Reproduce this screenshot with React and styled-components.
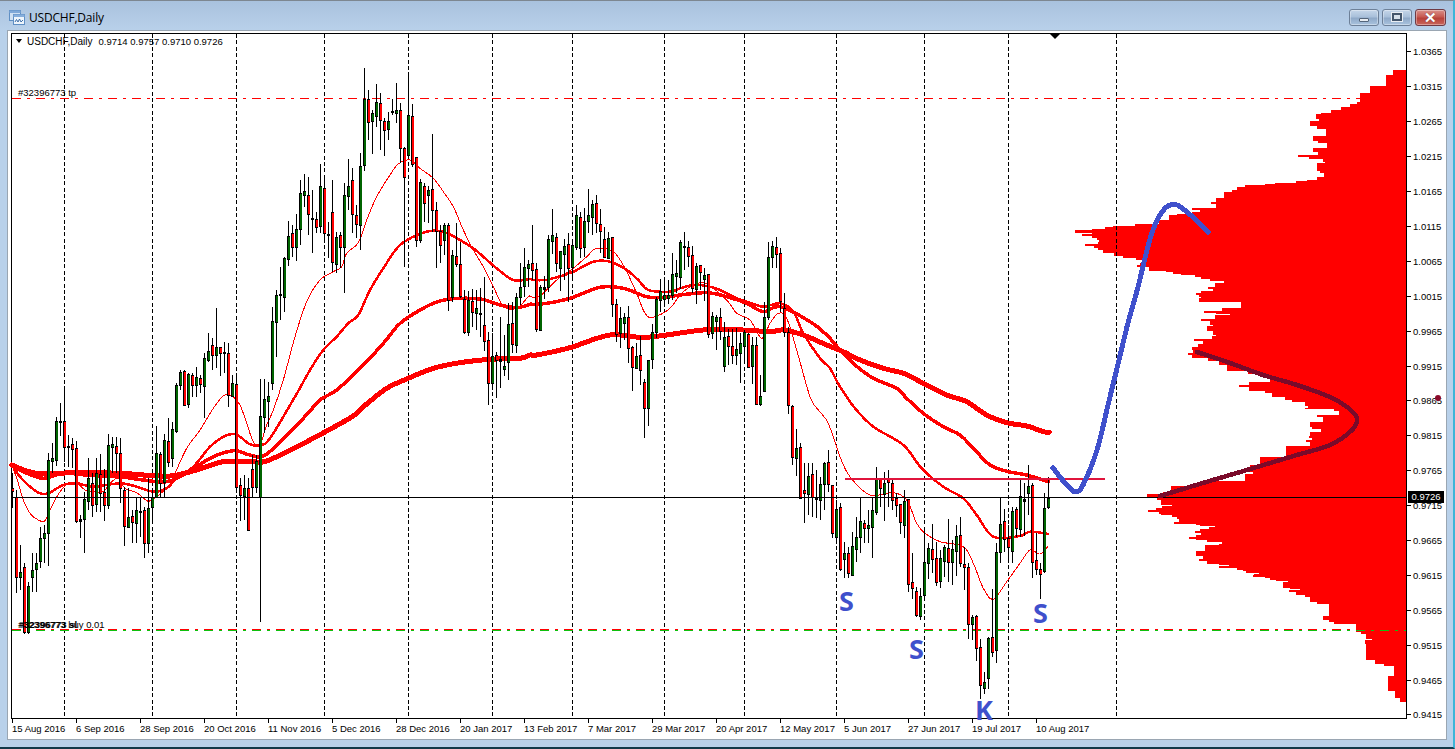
import React from "react";
import styled, { createGlobalStyle } from "styled-components";

const Global = createGlobalStyle`
  html, body { margin: 0; padding: 0; background: #b9d1ea; overflow: hidden; }
  * { box-sizing: border-box; }
`;

const AXIS_FONT = `"Liberation Sans", Arial, sans-serif`;

const Window = styled.div`
  width: 1455px; height: 749px; display: flex; flex-direction: column;
  background: linear-gradient(180deg, #a9c2de 0, #b9d1ea 30px);
  border-top: 1px solid #7d8791;
  border-bottom: 2px solid #12394a;
  border-right: 2px solid #3db5d8;
`;
const TitleBar = styled.header`
  height: 29px; flex: none; display: flex; align-items: center;
  padding: 3px 7px 0 9px; gap: 4px;
`;
const TitleText = styled.h1`
  margin: 0; flex: 1; font: 400 12px "Open Sans", sans-serif; color: #000; letter-spacing: -0.2px;
`;
const Controls = styled.div`display: flex; gap: 3px; margin-top: 0;`;
const CtlButton = styled.button`
  width: ${p => (p.$kind === "close" ? 31 : 30)}px; height: 17px; padding: 0; display: flex;
  align-items: center; justify-content: center; border-radius: 3px;
  border: 1px solid ${p => (p.$kind === "close" ? "#6f3a44" : "#6d8098")};
  background: ${p => p.$kind === "close"
    ? "linear-gradient(180deg,#d9908a 0,#c75a52 45%,#b8413a 55%,#c9665c 100%)"
    : "linear-gradient(180deg,#c5d6e9 0,#a9c0da 45%,#8fa9c8 55%,#a9c3de 100%)"};
  box-shadow: inset 0 0 0 1px rgba(255,255,255,.35);
`;
const MinGlyph = styled.span`width: 10px; height: 4px; background: #e8edf2; border: 1px solid #54657a; border-radius: 1px; margin-top: 5px;`;
const MaxGlyph = styled.span`width: 10px; height: 8px; background: #d6e0ea; border: 2px solid #44566c; box-shadow: 0 0 0 1px #e8edf2;`;
const CloseGlyph = styled.span`
  font: 700 15px/15px "Liberation Sans", sans-serif; color: #fff; text-shadow: 0 0 1px #5a2a30;
`;
const ClientFrame = styled.main`
  flex: 1; margin: 0 6px 7px 7px; border: 1px solid #9aa6b2; background: #fff;
  padding: 2px 0 0 3px; display: flex; flex-direction: column;
`;
const PlotRow = styled.div`display: flex; flex: none; height: 686px;`;
const Plot = styled.section`
  position: relative; width: 1396px; height: 686px; border: 1px solid #000; flex: none;
`;
const Svg = styled.svg`display: block; width: 1394px; height: 684px; overflow: visible;`;
const Legend = styled.div`
  position: absolute; left: 4px; top: 1px; display: flex; align-items: center; height: 12px;
  font: 9.5px ${AXIS_FONT}; color: #000; white-space: pre;
`;
const LegendMark = styled.i`
  width: 0; height: 0; border: 3.5px solid transparent; border-top: 4px solid #000; border-bottom: 0;
  margin-right: 5px;
`;
const LegendName = styled.span`margin-right: 6px; font-size: 10px;`;
const PriceAxis = styled.aside`
  position: relative; width: 41px; height: 686px; flex: none; padding-top: 1.55px;
  font: 9.5px ${AXIS_FONT}; color: #000;
`;
const PriceRow = styled.div`
  height: 34.9px; display: flex; align-items: center; gap: 2px;
  &::before { content: ""; width: 4px; height: 1px; background: #000; flex: none; }
`;
const PriceBadge = styled.div`
  position: absolute; left: 1px; top: 458px; width: 36px; height: 12px; background: #000; color: #fff;
  font: 9.5px/12px ${AXIS_FONT}; text-align: center;
`;
const MarkerDot = styled.div`
  position: absolute; left: 28px; top: 362px; width: 6px; height: 6px; border-radius: 50%; background: #8a0a2a;
`;
const TimeAxis = styled.footer`
  display: flex; padding-left: 1px; font: 9.5px ${AXIS_FONT}; color: #000;
`;
const TimeCell = styled.div`
  flex: none; width: 64px; white-space: nowrap;
  &::before { content: ""; display: block; width: 1px; height: 4px; background: #000; }
  & > span { display: block; margin: 0; line-height: 12px; }
`;
const ChartText = styled.text`
  font: 9.5px ${AXIS_FONT}; fill: #000;
`;
const BoldChartText = styled(ChartText)`font-weight: 700;`;
const HandLetter = styled.text`
  font: 700 27px "Open Sans", sans-serif; fill: #3f50cc;
`;

const c7 = [
[490,535,542,595,0],[540,560,802,850,0],[705,786,800,840,1],[760,770,965,972,0],[815,828,965,972,1],[730,781,800,845,1],[730,760,776,845,1],[650,685,752,775,1],[645,670,685,760,1],[430,450,668,768,1],[400,445,452,490,1],[320,333,450,468,1],[280,333,336,378,1],[232,333,412,455,0],[375,408,411,470,1],[385,402,416,475,0],[392,415,632,638,0],[615,628,632,685,1],[545,568,626,728,1],[445,505,572,600,1],[490,520,584,620,0],[445,490,582,605,1],[432,493,550,605,0],[478,547,584,632,0],[372,405,584,597,1],[380,403,410,490,1],[380,408,430,490,0],[385,430,535,578,0],[530,540,647,707,0],[533,622,650,655,1],[600,618,635,700,0],[565,600,638,700,1],[560,602,605,680,1],[590,600,700,745,0],[505,595,700,730,1],[540,562,590,635,1],[348,430,562,565,1],[425,432,520,560,0],[372,390,515,560,1],[325,393,457,470,0],[335,358,445,470,1],[218,225,362,368,1],[180,187,225,240,1],[180,184,284,287,0],[188,193,282,293,1],[190,196,225,262,0],[170,202,224,262,1],[195,204,223,250,0],[130,145,228,323,1],[70,122,150,155,1],[85,105,135,180,0],[-5,112,135,175,1],[110,112,130,198,0],[95,126,129,190,1],[98,128,255,290,0],[195,218,258,262,1],[195,222,530,550,0],[505,526,555,632,0],[495,535,558,630,1],[505,535,660,660,0],[435,478,530,560,0],[435,453,532,550,1],[208,318,560,935,1],[208,268,322,368,1],[215,258,272,350,1],
];
const c8 = [
[740,782,968,990,1],[690,706,785,890,1],[620,703,706,780,1],[590,594,712,755,1],[483,528,596,618,1],[495,520,562,590,0],[462,508,560,602,1],[360,400,506,555,1],[342,394,404,440,1],[350,406,463,525,0],[390,474,477,578,1],[455,478,500,520,0],[312,379,497,518,1],[355,385,520,550,0],[487,522,526,595,1],[360,457,607,635,0],[515,530,611,640,1],[515,526,560,625,0],[370,405,562,698,1],[297,379,407,450,1],[325,361,463,520,0],[435,466,491,535,0],[278,319,495,570,1],[25,116,316,332,1],[90,116,187,240,0],[150,160,182,282,1],[72,127,167,200,1],[100,130,181,270,0],[175,182,211,287,0],[155,183,208,240,1],[118,154,157,165,1],[70,151,158,190,1],[130,150,263,310,0],[262,263,352,622,0],[42,166,285,295,1],[132,169,311,322,0],[290,292,539,560,0],[358,367,540,548,1],[370,379,428,485,0],[378,390,404,490,1],[222,388,449,515,0],[425,451,513,625,0],[495,512,555,610,0],[490,496,540,585,1],[490,496,720,752,0],[570,585,710,725,1],[490,589,613,620,0],[545,613,708,715,0],[690,716,815,822,0],[692,720,817,828,1],[688,724,755,800,0],[690,745,758,810,1],[685,758,761,830,1],[650,796,842,872,0],[815,841,968,1035,0],[820,888,968,990,1],[875,886,900,1015,0],[770,898,903,985,1],[825,918,926,948,1],[730,793,905,960,1],[725,790,852,880,0],[700,712,856,878,1],[610,682,712,735,1],[565,622,678,710,1],[600,612,624,680,1],
];
const c9 = [
[135,250,270,300,0],[250,268,448,455,0],[315,320,450,452,1],[288,322,326,358,1],[165,178,322,335,1],[87,166,182,222,1],[160,170,250,275,0],[212,213,263,332,1],[178,198,222,300,1],[160,193,263,365,0],[190,196,262,300,1],[75,106,200,210,1],[97,110,203,235,0],[85,124,200,230,1],[27,106,122,158,1],[60,72,110,165,1],[45,70,130,160,0],[88,133,152,220,0],[140,176,230,235,0],[155,175,233,238,1],[172,172,373,412,0],[358,373,463,485,0],[380,415,460,503,1],[400,412,430,480,1],[378,412,505,548,0],[497,502,560,632,0],[490,528,565,568,1],[468,526,571,615,0],[598,607,683,773,0],[600,541,683,738,1],[432,457,538,566,1],[350,356,455,475,1],[298,332,360,395,1],[298,344,356,378,1],[300,344,355,372,1],[220,283,345,360,1],[240,280,288,340,1],[180,187,290,328,1],[156,198,202,270,1],[182,202,227,260,0],[198,226,325,340,0],[250,258,328,372,1],[255,256,276,330,0],[265,285,296,362,1],[282,283,463,475,0],[397,409,460,478,1],[404,411,423,510,1],[385,412,453,480,0],[425,471,557,575,1],[447,469,497,555,0],[447,498,524,553,0],[445,507,524,555,1],[460,489,518,608,1],[450,457,497,540,1],[460,463,560,565,0],[470,495,557,612,1],[470,496,673,673,0],[585,648,671,678,1],
[365,412,632,635,1],[185,232,412,420,1],[182,198,230,265,1],[172,202,223,265,0],[205,220,362,395,0],[340,383,455,472,0],[440,457,676,703,0],
];
const c12 = [
[316,318,470,495,0],[388,445,473,528,1],[430,442,593,595,0],
];
const c5 = [
[40,121,128,218,0],[40,79,132,195,1],[40,73,140,200,0],[60,140,148,205,1],[80,103,150,210,1],[35,38,102,180,1],[0,37,102,125,0],[105,105,248,265,0],[150,176,260,270,1],[158,172,358,362,0],[275,308,328,385,1],[290,310,370,385,0],[245,287,375,377,1],[200,262,298,335,1],[145,213,260,310,1],[210,220,235,280,0],[180,226,233,280,1],[145,181,232,325,1],[52,86,187,195,1],[85,88,115,170,0],[65,98,132,212,1],[60,86,97,170,0],[90,100,150,180,0],[130,144,166,200,0],[165,163,217,252,0],[120,152,224,265,1],[150,148,403,425,0],[310,397,415,447,0],[410,422,495,500,0],[415,438,497,510,1],[240,337,436,450,1],[280,295,340,388,1],[222,298,328,370,0],[275,323,397,408,0],[300,325,393,415,1],[285,292,332,380,1],[208,295,337,395,0],[270,297,335,405,1],[225,258,302,378,1],[200,256,338,350,0],[290,343,350,420,0],[340,352,521,568,0],[495,502,521,570,1],[495,498,595,632,0],[568,592,706,748,0],[665,697,715,733,1],[560,564,685,716,1],[418,562,605,620,0],[280,307,600,638,1],[145,223,305,338,1],[178,212,268,305,0],[225,265,292,340,0],[172,183,302,340,1],[170,178,235,260,0],[85,138,238,262,1],[100,148,152,258,1],[45,108,130,195,1],[100,105,335,383,0],[250,330,356,375,0],[340,357,372,446,0],[130,175,362,370,1],[80,143,172,178,1],
];
const toReal = (arr, oy) => arr.map(([h, t, b, l, g]) => [oy + h / 3, oy + t / 3, oy + b / 3, oy + l / 3, g]);
const candles = [
  ...toReal(c7, 310), ...toReal(c8, 60), ...toReal(c9, 180), ...toReal(c12, 300), ...toReal(c5, 450),
];

const mapPts = (pts, ox, oy) => pts.map(([x, y]) => [ox + x / 3, oy + y / 3]);
const thin = [
  ...mapPts([[8,470],[25,520],[40,570],[60,610],[85,630],[105,632],[125,590],[150,545],[175,520],[200,518],[225,540],[250,545],[280,545],[300,520],[325,505],[345,535],[380,548],[410,572],[425,570],[450,552],[475,530],[495,490],[530,415],[570,360],[610,295],[640,258],[665,258],[690,285],[710,340],[730,395],[750,403],[770,345],[790,300]], 10, 310),
  ...mapPts([[40,960],[75,830],[110,725],[150,660],[190,635],[215,620],[230,580],[265,548],[290,480],[320,410],[360,345],[385,312],[420,300],[450,325],[490,355],[520,395],[550,440],[580,510],[610,570],[640,620],[670,680],[700,738],[740,745],[775,710]], 270, 60),
  ...mapPts([[0,350],[20,352],[40,340],[80,300],[130,265],[170,230],[200,205],[250,215],[285,265],[320,340],[345,400],[370,412],[420,385],[450,345],[490,315],[530,312],[590,360],[620,400],[660,420],[695,475],[720,430],[745,400],[770,415]], 530, 180),
  ...mapPts([[110,150],[150,290],[175,330],[205,370],[240,470],[270,530],[330,585],[400,578],[440,600]], 760, 300),
  ...mapPts([[350,220],[375,250],[420,275],[490,290],[520,340],[550,415],[580,448],[620,395],[660,340],[690,300],[720,312],[745,288]], 800, 450),
];
const lineC = [
  ...mapPts([[5,465],[30,500],[60,530],[90,550],[115,550],[160,525],[200,520],[250,530],[330,520],[380,530],[430,545],[470,535],[500,505],[550,470],[600,410],[640,380],[670,372],[690,380],[720,403],[750,405],[780,385]], 10, 310),
  ...mapPts([[75,1010],[120,930],[160,870],[200,830],[235,790],[265,765],[300,690],[340,625],[385,560],[430,530],[480,513],[520,515],[570,540],[610,565],[640,590],[680,625],[730,660],[790,660]], 270, 60),
  ...mapPts([[0,297],[45,300],[80,292],[130,275],[190,245],[240,245],[290,270],[325,300],[355,330],[420,335],[450,325],[490,315],[530,318],[570,330],[620,355],[660,368],[700,380],[750,370],[790,395]], 530, 180),
  ...mapPts([[130,100],[180,175],[210,205],[240,260],[285,325],[340,380],[430,435]], 760, 300),
  ...mapPts([[365,55],[430,110],[490,145],[530,195],[580,260],[660,258],[690,245],[745,252]], 800, 450),
];
const lineB = [
  ...mapPts([[5,465],[40,485],[100,505],[160,490],[250,497],[330,500],[400,510],[470,515],[530,490],[600,445],[670,422],[720,435],[770,432]], 10, 310),
  ...mapPts([[100,1075],[150,1020],[200,990],[280,915],[340,850],[385,795],[425,765],[490,730],[540,717],[630,717],[690,735],[740,743],[790,733]], 270, 60),
  ...mapPts([[0,373],[50,370],[120,355],[210,322],[280,325],[350,350],[400,352],[450,345],[530,338],[590,350],[650,370],[700,395],[750,380]], 530, 180),
  ...mapPts([[150,65],[200,105],[240,150],[285,195],[340,235],[410,265],[440,295],[490,340],[550,380],[600,405],[640,445],[690,495],[745,515],[800,525],[865,545]], 760, 300),
];
const lineA = [
  ...mapPts([[5,465],[80,490],[200,488],[330,490],[430,497],[490,497],[560,480],[640,455],[720,455],[790,445]], 10, 310),
  ...mapPts([[230,1080],[280,1040],[350,985],[415,955],[490,925],[570,908],[660,898],[750,895],[800,885]], 270, 60),
  ...mapPts([[0,525],[120,503],[240,465],[350,472],[520,450],[640,450],[720,455]], 530, 180),
  ...mapPts([[70,90],[130,105],[200,135],[250,155],[300,180],[370,205],[430,220],[490,250],[560,285],[620,305],[680,345],[740,368],[800,378],[850,395],[868,397]], 760, 300),
];
const sortByX = pts => [...pts].sort((a, b) => a[0] - b[0]);
const blue = [[1053,468],[1060,477],[1067,485],[1075,492],[1083,485],[1097,450],[1108,405],[1119,360],[1128,323],[1138,287],[1147,250],[1153,230],[1160,215],[1168,206],[1177,205],[1187,212],[1198,222],[1208,232]];
const maroon = [[1197,352],[1230,363],[1263,375],[1297,385],[1330,397],[1347,407],[1357,418],[1352,430],[1330,445],[1297,455],[1257,467],[1213,480],[1160,496]];

const smooth = pts => {
  let d = `M${pts[0][0]} ${pts[0][1]}`;
  for (let i = 0; i < pts.length - 1; i++) {
    const p0 = pts[i - 1] || pts[i], p1 = pts[i], p2 = pts[i + 1], p3 = pts[i + 2] || p2;
    d += ` C${(p1[0] + (p2[0] - p0[0]) / 6).toFixed(1)} ${(p1[1] + (p2[1] - p0[1]) / 6).toFixed(1)} ${(p2[0] - (p3[0] - p1[0]) / 6).toFixed(1)} ${(p2[1] - (p3[1] - p1[1]) / 6).toFixed(1)} ${p2[0].toFixed(1)} ${p2[1].toFixed(1)}`;
  }
  return d;
};

const prof10 = [[30,970],[45,948],[78,900],[99,870],[127,862],[132,840],[141,813],[150,783],[159,753],[163,738],[178,748],[183,720],[198,742],[207,768],[228,729],[243,745],[248,771],[264,729],[276,745],[285,684],[291,718],[297,759],[306,765],[309,741],[333,750],[339,762],[351,742],[360,711],[363,678],[369,615],[372,585],[375,525],[381,501],[390,486],[396,462],[414,438],[426,423],[432,438],[444,366],[450,390],[456,366],[462,320],[465,297],[480,267],[492,195],[497,129],[501,105],[507,66],[510,15],[519,66],[522,36],[527,66],[533,81],[540,87],[546,84],[552,45],[558,72],[564,84],[570,99],[578,132],[588,159],[594,198],[600,225],[609,210],[615,201],[622,237],[633,288],[636,309],[642,333],[645,375],[651,393],[657,420],[663,462],[669,435],[681,414],[687,429],[693,393],[699,378],[705,387],[711,393],[714,387],[726,513],[744,456],[753,402],[759,438],[762,480],[765,435],[777,393],[783,420],[795,429],[798,411],[813,429],[825,438],[828,426],[837,372],[843,399],[852,384],[861,366],[866,366]];
const prof6 = [[0,190],[9,175],[15,185],[24,235],[33,268],[45,290],[63,355],[72,400],[84,420],[96,357],[105,327],[111,357],[124,405],[130,425],[142,465],[150,485],[156,525],[168,535],[174,525],[176,612],[182,627],[195,560],[201,578],[216,540],[231,545],[237,572],[246,540],[258,537],[264,547],[270,527],[276,540],[288,468],[321,390],[345,360],[366,370],[373,345],[393,210],[408,123],[426,100],[432,50],[441,80]];
const prof11 = [[0,93],[15,125],[18,96],[24,78],[30,54],[36,87],[42,93],[46,126],[52,141],[57,147],[66,132],[72,198],[75,210],[78,255],[81,237],[87,210],[93,195],[99,213],[105,198],[111,177],[117,198],[120,231],[126,276],[132,267],[135,225],[153,198],[168,219],[177,207],[183,231],[192,267],[195,297],[198,267],[204,321],[210,339],[213,348],[219,387],[222,372],[225,369],[231,405],[234,420],[240,438],[243,474],[246,459],[264,480],[267,510],[270,477],[276,498],[285,525],[291,540],[306,561],[312,597],[348,579],[360,597],[366,612],[372,678],[396,693],[402,708],[417,726],[420,705],[432,708],[480,735],[492,762],[498,792],[528,774],[573,795],[594,810]];
const steps = [
  ...prof10.map(([y, x]) => [60 + y / 3, 1070 + x / 3]),
  ...prof6.map(([y, x]) => [350 + y / 3, 1130 + x / 3]),
  ...prof11.map(([y, x]) => [500 + y / 3, 1130 + x / 3]),
];
const profilePath = (() => {
  let d = `M1406 ${steps[0][0].toFixed(0)}`;
  steps.forEach(([y, x], i) => {
    const ny = i + 1 < steps.length ? steps[i + 1][0] : 702;
    d += ` L${x.toFixed(0)} ${y.toFixed(0)} L${x.toFixed(0)} ${ny.toFixed(0)}`;
  });
  return d + " L1406 702 Z";
})();

const gridX = [64, 152, 236, 324, 408, 492, 572, 664, 744, 836, 924, 1008, 1116];
const prices = ["1.0365","1.0315","1.0265","1.0215","1.0165","1.0115","1.0065","1.0015","0.9965","0.9915","0.9865","0.9815","0.9765","0.9715","0.9665","0.9615","0.9565","0.9515","0.9465","0.9415"];
const dates = ["15 Aug 2016","6 Sep 2016","28 Sep 2016","20 Oct 2016","11 Nov 2016","5 Dec 2016","28 Dec 2016","20 Jan 2017","13 Feb 2017","7 Mar 2017","29 Mar 2017","20 Apr 2017","12 May 2017","5 Jun 2017","27 Jun 2017","19 Jul 2017","10 Aug 2017"];

const WindowIcon = () => (
  <svg width="16" height="15" viewBox="0 0 16 15" aria-hidden="true">
    <rect x="0.5" y="0.5" width="11" height="10" fill="#cfe0f3" stroke="#5f8fc4" />
    <rect x="0.5" y="0.5" width="11" height="2.5" fill="#7fa8d8" />
    <rect x="4.5" y="4.5" width="11" height="10" fill="#eef5fc" stroke="#5f8fc4" />
    <rect x="4.5" y="4.5" width="11" height="2.5" fill="#86aedc" />
    <path d="M6 12 L7.5 9.5 L9 12 L10.5 9 L12 12 L14 10" fill="none" stroke="#3f6fa8" strokeWidth="1" />
  </svg>
);

const Line = ({ pts, w, color = "#f00" }) => (
  <path d={smooth(pts)} fill="none" stroke={color} strokeWidth={w} strokeLinecap="round" strokeLinejoin="round" shapeRendering="crispEdges" />
);

const Chart = () => (
  <Svg viewBox="12 34 1394 684" aria-label="USDCHF daily candlestick chart">
    <path d={profilePath} fill="#f00" shapeRendering="crispEdges" />
    {gridX.map(x => (
      <line key={x} x1={x + 0.5} x2={x + 0.5} y1="34" y2="718" stroke="#000" strokeDasharray="4 2.4" shapeRendering="crispEdges" />
    ))}
    <line x1="12" x2="1406" y1="98.5" y2="98.5" stroke="#f00" strokeDasharray="9 6 3 6" shapeRendering="crispEdges" />
    <line x1="12" x2="1406" y1="630.5" y2="630.5" stroke="#0fc00f" strokeDasharray="9 6 3 6" shapeRendering="crispEdges" />
    <line x1="12" x2="1356" y1="629.5" y2="629.5" stroke="#f00" strokeDasharray="9 6 3 6" shapeRendering="crispEdges" />
    <Line pts={sortByX(lineA)} w={5} />
    <Line pts={sortByX(lineB)} w={3.5} />
    <Line pts={sortByX(lineC)} w={2.5} />
    <Line pts={sortByX(thin)} w={1} />
    {candles.map(([h, t, b, l, g], i) => {
      const x = 12 + 4 * i;
      const top = Math.round(t), bot = Math.max(Math.round(b), top + 1);
      return (
        <g key={i} shapeRendering="crispEdges">
          <rect x={x} y={Math.round(h)} width="1" height={Math.max(1, Math.round(l) - Math.round(h))} fill="#000" />
          <rect x={x - 1} y={top} width="3" height={bot - top + 1} fill="#000" />
          {bot - top > 2 && <rect x={x} y={top + 1} width="2" height={bot - top - 1} fill={g ? "#006400" : "#f00"} />}
        </g>
      );
    })}
    <line x1="12" x2="1406" y1="497.5" y2="497.5" stroke="#000" shapeRendering="crispEdges" />
    <rect x="845" y="478" width="260" height="2" fill="#e0143c" />
    <path d="M1050 34 L1060 34 L1055 39 Z" fill="#000" />
    <Line pts={blue} w={5} color="#3f50cc" />
    <Line pts={maroon} w={4.5} color="#7a0a2a" />
    <ChartText x="18" y="96">#32396773 tp</ChartText>
    <ChartText x="18" y="628">#32396773 buy 0.01</ChartText>
    <BoldChartText x="19" y="628">#32396773 sl</BoldChartText>
    <HandLetter x="839" y="611">S</HandLetter>
    <HandLetter x="909" y="659">S</HandLetter>
    <HandLetter x="1033" y="623">S</HandLetter>
    <HandLetter x="975" y="720">K</HandLetter>
  </Svg>
);

export default function App() {
  return (
    <>
      <Global />
      <Window>
        <TitleBar>
          <WindowIcon />
          <TitleText>USDCHF,Daily</TitleText>
          <Controls>
            <CtlButton $kind="min" aria-label="Minimize"><MinGlyph /></CtlButton>
            <CtlButton $kind="max" aria-label="Maximize"><MaxGlyph /></CtlButton>
            <CtlButton $kind="close" aria-label="Close"><CloseGlyph>✕</CloseGlyph></CtlButton>
          </Controls>
        </TitleBar>
        <ClientFrame>
          <PlotRow>
            <Plot>
              <Chart />
              <Legend>
                <LegendMark />
                <LegendName>USDCHF,Daily</LegendName>
                0.9714 0.9757 0.9710 0.9726
              </Legend>
            </Plot>
            <PriceAxis>
              {prices.map(p => <PriceRow key={p}>{p}</PriceRow>)}
              <PriceBadge>0.9726</PriceBadge>
              <MarkerDot />
            </PriceAxis>
          </PlotRow>
          <TimeAxis>
            {dates.map(d => <TimeCell key={d}><span>{d}</span></TimeCell>)}
          </TimeAxis>
        </ClientFrame>
      </Window>
    </>
  );
}
